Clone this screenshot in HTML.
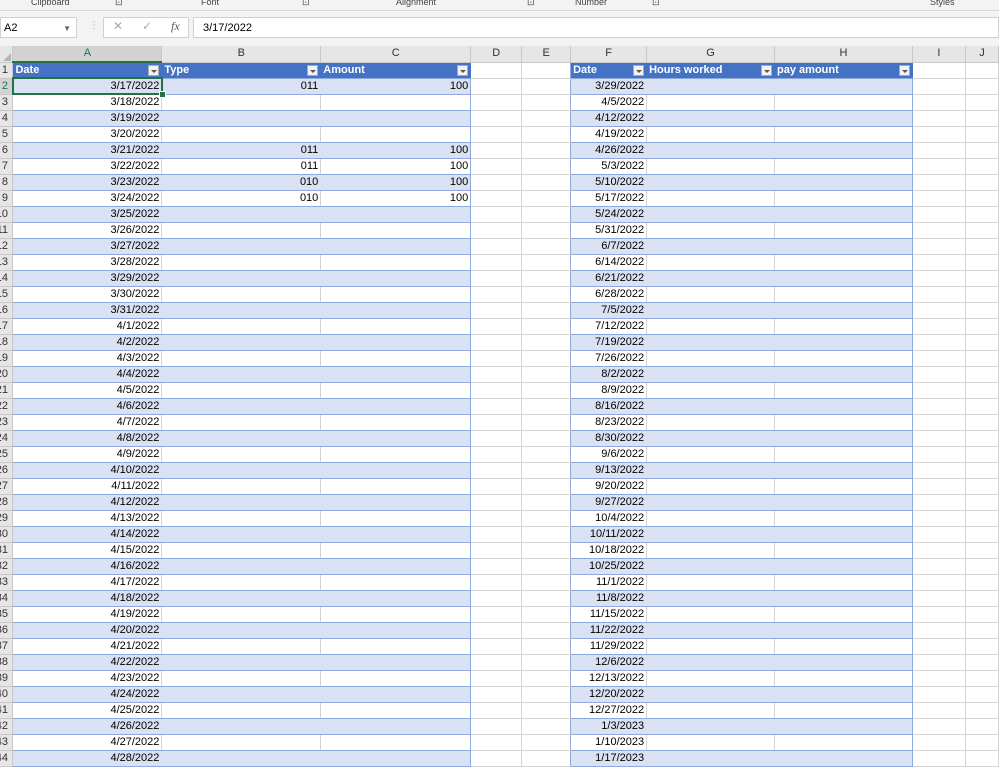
<!DOCTYPE html>
<html><head><meta charset="utf-8"><style>
body{margin:0;width:999px;height:762px;overflow:hidden;background:#fff;font-family:"Liberation Sans",Arial,sans-serif;position:relative}
.rib{position:absolute;left:0;top:0;width:999px;height:10px;background:#f3f3f3;border-bottom:1px solid #d6d6d6;font-size:9px;color:#444;overflow:hidden}
.rib span{position:absolute;top:-3px}
.fbar{position:absolute;left:0;top:11px;width:999px;height:35px;background:#f3f3f3}
.nb{position:absolute;left:0;top:6px;width:77px;height:21px;background:#fff;border:1px solid #d0d0d0;font-size:11px;line-height:21px;padding-left:3px;box-sizing:border-box}
.fi{position:absolute;left:193px;top:6px;width:806px;height:21px;background:#fff;border:1px solid #d0d0d0;font-size:11px;line-height:20px;padding-left:9px;box-sizing:border-box}
.btns{position:absolute;left:103px;top:6px;width:86px;height:21px;background:#fff;border:1px solid #d0d0d0;box-sizing:border-box;color:#aaa;font-size:12px}
table{position:absolute;top:46px;left:0;border-collapse:collapse;table-layout:fixed;font-size:11px}
td,th{height:15px;padding:0 2px;border-right:1px solid #d4d4d4;border-bottom:1px solid #d4d4d4;white-space:nowrap;overflow:hidden;line-height:15px;box-sizing:border-box}
th{background:#e6e6e6;font-weight:normal;color:#333;text-align:center;padding:0;border-color:#c8c8c8}
td.r{text-align:right}
tbody td:nth-child(2),tbody td:nth-child(3),tbody td:nth-child(4),tbody td:nth-child(7),tbody td:nth-child(8),tbody td:nth-child(9){border-bottom-color:#8ea9db}
tr.b td:nth-child(2),tr.b td:nth-child(3),tr.b td:nth-child(4),tr.b td:nth-child(7),tr.b td:nth-child(8),tr.b td:nth-child(9){background:#d9e1f2;border-right-color:#d9e1f2}
tbody td:nth-child(4),tr.b td:nth-child(4),tbody td:nth-child(9),tr.b td:nth-child(9){border-right-color:#8ea9db}
tbody td:nth-child(6){border-right-color:#8ea9db}
tr.h td:nth-child(2),tr.h td:nth-child(3),tr.h td:nth-child(4),tr.h td:nth-child(7),tr.h td:nth-child(8),tr.h td:nth-child(9){background:#4472c4;color:#fff;font-weight:bold;border-right-color:#4472c4;position:relative}
.dd{position:absolute;right:2px;top:2px;width:11px;height:11px;background:#f2f2f2;border:1px solid #aaa;box-sizing:border-box}
.dd:after{content:"";position:absolute;left:2px;top:4px;border-left:3px solid transparent;border-right:3px solid transparent;border-top:3px solid #555}
.act{position:absolute;left:12px;top:77px;width:151px;height:18px;border:2px solid #217346;box-sizing:border-box}
.hnd{position:absolute;left:159px;top:91px;width:5px;height:5px;background:#217346;border:1px solid #fff}
.rn{position:absolute;left:0;top:62px;width:12px;font-size:11px;color:#333}
.rn div{height:16px;line-height:16px;width:12px;box-sizing:border-box;direction:rtl;text-align:right;padding-right:4px;overflow:hidden;white-space:nowrap}
</style></head><body>
<div class="rib"><span style="left:31px">Clipboard</span><span style="left:115px">⊡</span><span style="left:201px">Font</span><span style="left:302px">⊡</span><span style="left:396px">Alignment</span><span style="left:527px">⊡</span><span style="left:575px">Number</span><span style="left:652px">⊡</span><span style="left:930px">Styles</span></div>
<div class="fbar"><div class="nb">A2<span style="position:absolute;right:5px;top:0;font-size:8px;color:#666">▼</span></div><span style="position:absolute;left:89px;top:9px;color:#aaa;font-size:10px">⋮</span><div class="btns"><span style="position:absolute;left:9px;top:1px">✕</span><span style="position:absolute;left:38px;top:1px">✓</span><span style="position:absolute;left:67px;top:1px;color:#555;font-style:italic;font-family:'Liberation Serif',serif">fx</span></div><div class="fi">3/17/2022</div></div>
<table>
<colgroup><col style="width:13px"><col style="width:149px"><col style="width:159px"><col style="width:150px"><col style="width:51px"><col style="width:49px"><col style="width:76px"><col style="width:128px"><col style="width:138px"><col style="width:53px"><col style="width:33px"></colgroup>
<thead><tr><th style="position:relative"><span style="position:absolute;right:1px;bottom:1px;border-left:8px solid transparent;border-bottom:8px solid #b5b5b5"></span></th><th style="background:#d2d2d2;color:#217346;border-bottom:2px solid #217346">A</th><th>B</th><th>C</th><th>D</th><th>E</th><th>F</th><th>G</th><th>H</th><th>I</th><th>J</th></tr></thead>
<tbody>
<tr class="h"><th></th><td>Date<span class="dd"></span></td><td>Type<span class="dd"></span></td><td>Amount<span class="dd"></span></td><td></td><td></td><td>Date<span class="dd"></span></td><td>Hours worked<span class="dd"></span></td><td>pay amount<span class="dd"></span></td><td></td><td></td></tr>
<tr class="b"><th style="background:#d2d2d2"></th><td class="r">3/17/2022</td><td class="r">011</td><td class="r">100</td><td></td><td></td><td class="r">3/29/2022</td><td></td><td></td><td></td><td></td></tr>
<tr><th></th><td class="r">3/18/2022</td><td></td><td></td><td></td><td></td><td class="r">4/5/2022</td><td></td><td></td><td></td><td></td></tr>
<tr class="b"><th></th><td class="r">3/19/2022</td><td></td><td></td><td></td><td></td><td class="r">4/12/2022</td><td></td><td></td><td></td><td></td></tr>
<tr><th></th><td class="r">3/20/2022</td><td></td><td></td><td></td><td></td><td class="r">4/19/2022</td><td></td><td></td><td></td><td></td></tr>
<tr class="b"><th></th><td class="r">3/21/2022</td><td class="r">011</td><td class="r">100</td><td></td><td></td><td class="r">4/26/2022</td><td></td><td></td><td></td><td></td></tr>
<tr><th></th><td class="r">3/22/2022</td><td class="r">011</td><td class="r">100</td><td></td><td></td><td class="r">5/3/2022</td><td></td><td></td><td></td><td></td></tr>
<tr class="b"><th></th><td class="r">3/23/2022</td><td class="r">010</td><td class="r">100</td><td></td><td></td><td class="r">5/10/2022</td><td></td><td></td><td></td><td></td></tr>
<tr><th></th><td class="r">3/24/2022</td><td class="r">010</td><td class="r">100</td><td></td><td></td><td class="r">5/17/2022</td><td></td><td></td><td></td><td></td></tr>
<tr class="b"><th></th><td class="r">3/25/2022</td><td></td><td></td><td></td><td></td><td class="r">5/24/2022</td><td></td><td></td><td></td><td></td></tr>
<tr><th></th><td class="r">3/26/2022</td><td></td><td></td><td></td><td></td><td class="r">5/31/2022</td><td></td><td></td><td></td><td></td></tr>
<tr class="b"><th></th><td class="r">3/27/2022</td><td></td><td></td><td></td><td></td><td class="r">6/7/2022</td><td></td><td></td><td></td><td></td></tr>
<tr><th></th><td class="r">3/28/2022</td><td></td><td></td><td></td><td></td><td class="r">6/14/2022</td><td></td><td></td><td></td><td></td></tr>
<tr class="b"><th></th><td class="r">3/29/2022</td><td></td><td></td><td></td><td></td><td class="r">6/21/2022</td><td></td><td></td><td></td><td></td></tr>
<tr><th></th><td class="r">3/30/2022</td><td></td><td></td><td></td><td></td><td class="r">6/28/2022</td><td></td><td></td><td></td><td></td></tr>
<tr class="b"><th></th><td class="r">3/31/2022</td><td></td><td></td><td></td><td></td><td class="r">7/5/2022</td><td></td><td></td><td></td><td></td></tr>
<tr><th></th><td class="r">4/1/2022</td><td></td><td></td><td></td><td></td><td class="r">7/12/2022</td><td></td><td></td><td></td><td></td></tr>
<tr class="b"><th></th><td class="r">4/2/2022</td><td></td><td></td><td></td><td></td><td class="r">7/19/2022</td><td></td><td></td><td></td><td></td></tr>
<tr><th></th><td class="r">4/3/2022</td><td></td><td></td><td></td><td></td><td class="r">7/26/2022</td><td></td><td></td><td></td><td></td></tr>
<tr class="b"><th></th><td class="r">4/4/2022</td><td></td><td></td><td></td><td></td><td class="r">8/2/2022</td><td></td><td></td><td></td><td></td></tr>
<tr><th></th><td class="r">4/5/2022</td><td></td><td></td><td></td><td></td><td class="r">8/9/2022</td><td></td><td></td><td></td><td></td></tr>
<tr class="b"><th></th><td class="r">4/6/2022</td><td></td><td></td><td></td><td></td><td class="r">8/16/2022</td><td></td><td></td><td></td><td></td></tr>
<tr><th></th><td class="r">4/7/2022</td><td></td><td></td><td></td><td></td><td class="r">8/23/2022</td><td></td><td></td><td></td><td></td></tr>
<tr class="b"><th></th><td class="r">4/8/2022</td><td></td><td></td><td></td><td></td><td class="r">8/30/2022</td><td></td><td></td><td></td><td></td></tr>
<tr><th></th><td class="r">4/9/2022</td><td></td><td></td><td></td><td></td><td class="r">9/6/2022</td><td></td><td></td><td></td><td></td></tr>
<tr class="b"><th></th><td class="r">4/10/2022</td><td></td><td></td><td></td><td></td><td class="r">9/13/2022</td><td></td><td></td><td></td><td></td></tr>
<tr><th></th><td class="r">4/11/2022</td><td></td><td></td><td></td><td></td><td class="r">9/20/2022</td><td></td><td></td><td></td><td></td></tr>
<tr class="b"><th></th><td class="r">4/12/2022</td><td></td><td></td><td></td><td></td><td class="r">9/27/2022</td><td></td><td></td><td></td><td></td></tr>
<tr><th></th><td class="r">4/13/2022</td><td></td><td></td><td></td><td></td><td class="r">10/4/2022</td><td></td><td></td><td></td><td></td></tr>
<tr class="b"><th></th><td class="r">4/14/2022</td><td></td><td></td><td></td><td></td><td class="r">10/11/2022</td><td></td><td></td><td></td><td></td></tr>
<tr><th></th><td class="r">4/15/2022</td><td></td><td></td><td></td><td></td><td class="r">10/18/2022</td><td></td><td></td><td></td><td></td></tr>
<tr class="b"><th></th><td class="r">4/16/2022</td><td></td><td></td><td></td><td></td><td class="r">10/25/2022</td><td></td><td></td><td></td><td></td></tr>
<tr><th></th><td class="r">4/17/2022</td><td></td><td></td><td></td><td></td><td class="r">11/1/2022</td><td></td><td></td><td></td><td></td></tr>
<tr class="b"><th></th><td class="r">4/18/2022</td><td></td><td></td><td></td><td></td><td class="r">11/8/2022</td><td></td><td></td><td></td><td></td></tr>
<tr><th></th><td class="r">4/19/2022</td><td></td><td></td><td></td><td></td><td class="r">11/15/2022</td><td></td><td></td><td></td><td></td></tr>
<tr class="b"><th></th><td class="r">4/20/2022</td><td></td><td></td><td></td><td></td><td class="r">11/22/2022</td><td></td><td></td><td></td><td></td></tr>
<tr><th></th><td class="r">4/21/2022</td><td></td><td></td><td></td><td></td><td class="r">11/29/2022</td><td></td><td></td><td></td><td></td></tr>
<tr class="b"><th></th><td class="r">4/22/2022</td><td></td><td></td><td></td><td></td><td class="r">12/6/2022</td><td></td><td></td><td></td><td></td></tr>
<tr><th></th><td class="r">4/23/2022</td><td></td><td></td><td></td><td></td><td class="r">12/13/2022</td><td></td><td></td><td></td><td></td></tr>
<tr class="b"><th></th><td class="r">4/24/2022</td><td></td><td></td><td></td><td></td><td class="r">12/20/2022</td><td></td><td></td><td></td><td></td></tr>
<tr><th></th><td class="r">4/25/2022</td><td></td><td></td><td></td><td></td><td class="r">12/27/2022</td><td></td><td></td><td></td><td></td></tr>
<tr class="b"><th></th><td class="r">4/26/2022</td><td></td><td></td><td></td><td></td><td class="r">1/3/2023</td><td></td><td></td><td></td><td></td></tr>
<tr><th></th><td class="r">4/27/2022</td><td></td><td></td><td></td><td></td><td class="r">1/10/2023</td><td></td><td></td><td></td><td></td></tr>
<tr class="b"><th></th><td class="r">4/28/2022</td><td></td><td></td><td></td><td></td><td class="r">1/17/2023</td><td></td><td></td><td></td><td></td></tr>
</tbody></table>
<div class="rn"><div>1</div><div style="color:#217346">2</div><div>3</div><div>4</div><div>5</div><div>6</div><div>7</div><div>8</div><div>9</div><div>10</div><div>11</div><div>12</div><div>13</div><div>14</div><div>15</div><div>16</div><div>17</div><div>18</div><div>19</div><div>20</div><div>21</div><div>22</div><div>23</div><div>24</div><div>25</div><div>26</div><div>27</div><div>28</div><div>29</div><div>30</div><div>31</div><div>32</div><div>33</div><div>34</div><div>35</div><div>36</div><div>37</div><div>38</div><div>39</div><div>40</div><div>41</div><div>42</div><div>43</div><div>44</div></div>
<div class="act"></div><div class="hnd"></div>
</body></html>
